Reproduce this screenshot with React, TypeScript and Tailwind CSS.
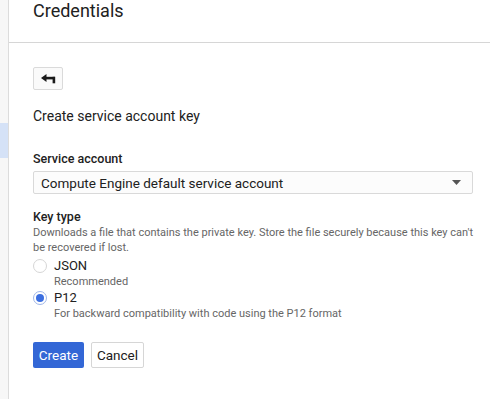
import { useState } from "react";

function BackIcon() {
  return (
    <svg width="15" height="10" viewBox="0 0 15 10" fill="#1a1a1a">
      <path d="M0 4 L5.5 0 L5.5 8 Z" />
      <rect x="5" y="2.8" width="9" height="2.6" />
      <rect x="11.6" y="2.8" width="2.6" height="6.5" />
    </svg>
  );
}

function Radio({ checked }: { checked: boolean }) {
  return (
    <span
      className={`flex h-[14px] w-[14px] shrink-0 items-center justify-center rounded-full border bg-white ${
        checked ? "border-[#9fb6e8]" : "border-[#d6d6d6]"
      }`}
    >
      {checked && <span className="h-[8px] w-[8px] rounded-full bg-[#3b6ee0]" />}
    </span>
  );
}

export default function App() {
  const [keyType, setKeyType] = useState<"json" | "p12">("p12");

  return (
    <div
      className="flex h-[399px] w-[490px] overflow-hidden bg-white text-[#212121]"
      style={{ fontFamily: "Roboto, 'Liberation Sans', Arial, sans-serif" }}
    >
      {/* Sidebar edge */}
      <div className="flex w-[9px] shrink-0 flex-col border-r border-[#dcdcdc] bg-[#f7f7f7]">
        <div className="h-[123px]" />
        <div className="h-[35px] bg-[#d5e2f7]" />
      </div>

      <div className="flex flex-1 flex-col">
        {/* Header */}
        <div className="h-[43px] border-b border-[#d6d6d6] pl-[24px]">
          <h1 className="text-[18px] leading-[21px] text-[#212121]">Credentials</h1>
        </div>

        <div className="flex flex-col px-[24px]">
          <button className="mt-[24px] flex h-[23px] w-[30px] items-center justify-center rounded-[2px] border border-[#dadada] bg-[#fafafa]">
            <BackIcon />
          </button>

          <h2 className="mt-[16px] text-[14px] leading-[20px] text-[#212121]">
            Create service account key
          </h2>

          <label className="mt-[25px] text-[12.5px] font-medium leading-[16px] text-[#212121]">
            Service account
          </label>
          <div className="mt-[4px] flex h-[23px] w-[440px] items-center justify-between rounded-[2px] border border-[#d9d9d9] bg-[#fcfcfc] pl-[7px] pr-[11px]">
            <span className="text-[13.5px] leading-[16px] text-[#212121]">
              Compute Engine default service account
            </span>
            <svg width="9" height="5" viewBox="0 0 9 5" fill="#555">
              <path d="M0 0 L9 0 L4.5 5 Z" />
            </svg>
          </div>

          <label className="mt-[15px] text-[12.5px] font-medium leading-[16px] text-[#212121]">
            Key type
          </label>
          <p className="w-[444px] text-[11px] leading-[15px] text-[#666]">
            Downloads a file that contains the private key. Store the file securely because this
            key can't be recovered if lost.
          </p>

          <div className="mt-[3px] flex flex-col">
            <label
              className="flex h-[16px] cursor-pointer items-center gap-[7px]"
              onClick={() => setKeyType("json")}
            >
              <Radio checked={keyType === "json"} />
              <span className="text-[13px] leading-[16px] text-[#212121]">JSON</span>
            </label>
            <span className="pl-[21px] text-[11px] leading-[16px] text-[#666]">Recommended</span>
            <label
              className="flex h-[16px] cursor-pointer items-center gap-[7px]"
              onClick={() => setKeyType("p12")}
            >
              <Radio checked={keyType === "p12"} />
              <span className="text-[13px] leading-[16px] text-[#212121]">P12</span>
            </label>
            <span className="pl-[21px] text-[11px] leading-[16px] text-[#666]">
              For backward compatibility with code using the P12 format
            </span>
          </div>

          <div className="mt-[20px] flex gap-[7px]">
            <button className="h-[26px] w-[51px] rounded-[2px] bg-[#3367d6] text-[13.5px] text-white">
              Create
            </button>
            <button className="h-[26px] w-[53px] rounded-[2px] border border-[#d6d6d6] bg-white text-[13.5px] text-[#212121]">
              Cancel
            </button>
          </div>
        </div>
      </div>
    </div>
  );
}
